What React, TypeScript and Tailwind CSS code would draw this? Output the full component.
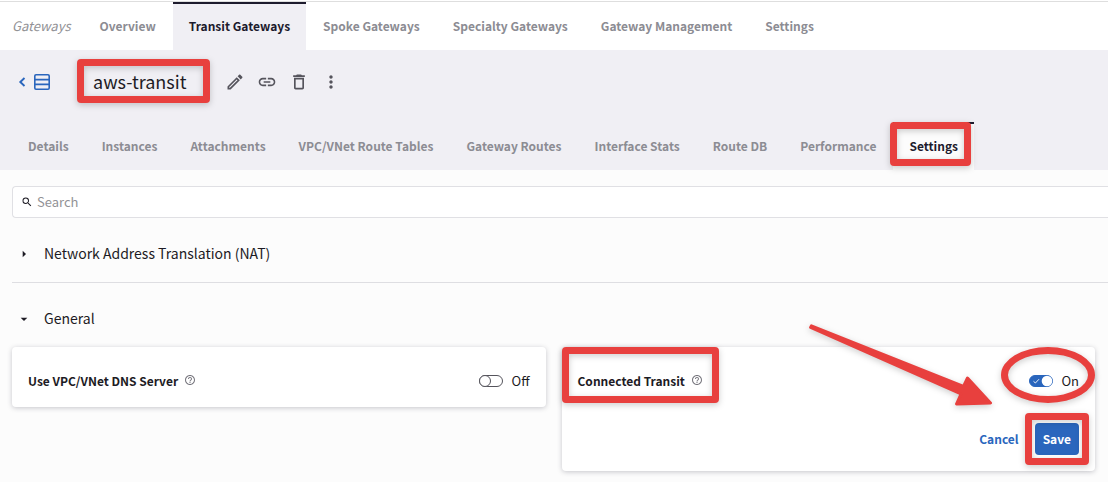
import { useState, type ReactNode } from "react";
import {
  MdArrowDropDown,
  MdArrowRight,
  MdDeleteOutline,
  MdHelpOutline,
  MdLink,
  MdMoreVert,
  MdOutlineEdit,
  MdSearch,
} from "react-icons/md";

const gatewayTabs = [
  "Overview",
  "Transit Gateways",
  "Spoke Gateways",
  "Specialty Gateways",
  "Gateway Management",
  "Settings",
];

const detailTabs = [
  "Details",
  "Instances",
  "Attachments",
  "VPC/VNet Route Tables",
  "Gateway Routes",
  "Interface Stats",
  "Route DB",
  "Performance",
  "Settings",
];

const actions = [
  { label: "Edit", Icon: MdOutlineEdit },
  { label: "Copy link", Icon: MdLink },
  { label: "Delete", Icon: MdDeleteOutline },
  { label: "More", Icon: MdMoreVert },
];

function Highlight({ className }: { className: string }) {
  return (
    <span
      aria-hidden="true"
      className={`pointer-events-none absolute z-10 border-[7px] border-[#e8403e] drop-shadow-[0_2px_3px_rgba(0,0,0,0.2)] ${className}`}
    />
  );
}

function Tab({
  label,
  active,
  activeBg,
  children,
}: {
  label: string;
  active: boolean;
  activeBg: string;
  children?: ReactNode;
}) {
  return (
    <a
      href="#"
      aria-current={active ? "page" : undefined}
      className={`relative flex h-12 shrink-0 items-center border-t-2 px-4 pb-0.5 text-xs leading-5 font-bold whitespace-nowrap ${
        active ? `border-[#1d1b2d] text-[#1d1b2d] ${activeBg}` : "border-transparent text-[#8c8c93]"
      }`}
    >
      {label}
      {children}
    </a>
  );
}

function Toggle({ id, on, onChange }: { id: string; on: boolean; onChange: (v: boolean) => void }) {
  return (
    <span className="relative flex">
      <input
        id={id}
        type="checkbox"
        role="switch"
        checked={on}
        onChange={(e) => onChange(e.target.checked)}
        className="h-3 w-6 appearance-none rounded-full border border-[#55545c] bg-white checked:border-[#2a66bd] checked:bg-[#2a66bd]"
      />
      <svg viewBox="0 0 24 12" className="pointer-events-none absolute inset-0 h-3 w-6" fill="none" aria-hidden="true">
        {on ? (
          <>
            <circle cx="18" cy="6" r="5.3" fill="#fff" />
            <path d="M4.5 6.3 6.4 8 10 4.2" stroke="#fff" strokeWidth="0.9" />
          </>
        ) : (
          <circle cx="6" cy="6" r="5.5" stroke="#55545c" fill="#fff" />
        )}
      </svg>
    </span>
  );
}

function SettingCard({
  id,
  title,
  initial,
  titleMark,
  toggleMark,
  children,
}: {
  id: string;
  title: string;
  initial: boolean;
  titleMark?: ReactNode;
  toggleMark?: ReactNode;
  children?: ReactNode;
}) {
  const [on, setOn] = useState(initial);
  return (
    <section className="relative rounded bg-white shadow-[0_1px_5px_rgba(40,40,60,0.25)]">
      <div className="flex h-15 items-center justify-between px-4 pt-2">
        <div className="relative flex items-center gap-1.5">
          <label htmlFor={id} className="text-xs leading-5 font-bold text-[#1d1b24]">
            {title}
          </label>
          <MdHelpOutline className="mb-0.5 size-3 text-[#77767e]" />
          {titleMark}
        </div>
        <div className="relative flex items-center gap-2">
          <Toggle id={id} on={on} onChange={setOn} />
          <span className="text-[13px] leading-5 text-[#1d1b24]">{on ? "On" : "Off"}</span>
          {toggleMark}
        </div>
      </div>
      {children}
    </section>
  );
}

export default function App() {
  return (
    <div className="min-h-screen overflow-x-hidden bg-[#fcfcfc] font-['Noto_Sans_CJK_SC',sans-serif] text-[#1d1b24]">
      <nav aria-label="Gateways" className="bg-white pt-px">
        <div className="flex gap-px border-t border-[#dedede] pl-3">
          <span className="flex items-center pr-3 text-[13px] leading-5 text-[#929296] italic">Gateways</span>
          {gatewayTabs.map((label) => (
            <Tab key={label} label={label} active={label === "Transit Gateways"} activeBg="bg-[#f0eff4]" />
          ))}
        </div>
      </nav>

      <header className="bg-[#f0eff4]">
        <div className="flex h-16 items-center px-4">
          <a href="#" aria-label="Back to gateways" className="flex text-[#2a66bd]">
            <svg viewBox="0 0 36 16" className="h-4 w-9" fill="none" stroke="currentColor" aria-hidden="true">
              <path d="M8.5 4 4.3 8l4.2 4" strokeWidth="1.9" />
              <rect x="18.8" y="0.8" width="14.4" height="14.4" rx="1.2" strokeWidth="1.6" />
              <path d="M19 5.6h14M19 10.4h14" strokeWidth="1.6" />
            </svg>
          </a>
          <h1 className="relative ml-[41px] pb-0.5 text-lg leading-6">
            aws-transit
            <Highlight className="-top-2.5 -right-6 -bottom-2 -left-4 rounded-sm" />
          </h1>
          <div className="ml-[37px] flex gap-2">
            {actions.map(({ label, Icon }) => (
              <button key={label} type="button" aria-label={label} className="flex size-6 items-center justify-center text-[#55545c]">
                <Icon className="size-5" />
              </button>
            ))}
          </div>
        </div>
        <nav aria-label="Gateway details" className="flex gap-px px-3 pt-2">
          {detailTabs.map((label) => (
            <Tab key={label} label={label} active={label === "Settings"} activeBg="bg-[#fcfcfc]">
              {label === "Settings" && <Highlight className="-top-0.5 right-[3px] bottom-1 -left-[3px] rounded-sm" />}
            </Tab>
          ))}
        </nav>
      </header>

      <main className="pt-4 pb-3 pl-3">
        <div className="flex h-8 items-center gap-1 rounded-l border border-r-0 border-[#e0e0e4] bg-white pl-2">
          <MdSearch className="size-3" />
          <input
            type="search"
            aria-label="Search"
            placeholder="Search"
            className="min-w-0 flex-1 bg-transparent text-[13px] leading-5 outline-none placeholder:text-[#929296]"
          />
        </div>

        <h2 className="mt-2 border-b border-[#dedee2]">
          <button type="button" aria-expanded="false" className="flex h-14 w-full items-center gap-3 pl-1 text-sm leading-6">
            <MdArrowRight className="size-4" />
            <span className="pb-0.5">Network Address Translation (NAT)</span>
          </button>
        </h2>

        <h2 className="mt-2">
          <button type="button" aria-expanded="true" className="flex h-14 w-full items-center gap-3 pl-1 text-sm leading-6">
            <MdArrowDropDown className="size-4" />
            <span className="pb-0.5">General</span>
          </button>
        </h2>

        <div className="grid grid-cols-2 items-start gap-4 pr-[13px]">
          <SettingCard id="dns-server" title="Use VPC/VNet DNS Server" initial={false} />
          <SettingCard
            id="connected-transit"
            title="Connected Transit"
            initial={true}
            titleMark={<Highlight className="-inset-x-4 -top-6 -bottom-3 rounded-sm" />}
            toggleMark={<Highlight className="-top-6 -right-4 -bottom-3 -left-7 rounded-[50%]" />}
          >
            <div className="flex justify-end gap-2 p-4">
              <button type="button" className="px-2 text-xs leading-5 font-bold text-[#2a66bd]">
                Cancel
              </button>
              <button type="button" className="relative h-8 rounded bg-[#2a66bd] px-2 text-xs leading-5 font-bold text-white">
                Save
                <Highlight className="-inset-x-2.5 -inset-y-2.5 rounded-sm" />
              </button>
            </div>
            <svg
              viewBox="0 0 190 90"
              className="pointer-events-none absolute -top-6 right-[101px] z-10 h-[90px] w-[190px] drop-shadow-[0_2px_3px_rgba(0,0,0,0.2)]"
              fill="#e8403e"
              stroke="#e8403e"
              strokeWidth="3"
              strokeLinejoin="round"
              aria-hidden="true"
            >
              <path d="M6.6 4.4 7.4 2.8 159.5 63.5 163.5 55 186.5 80 152.5 81 157 71Z" />
            </svg>
          </SettingCard>
        </div>
      </main>
    </div>
  );
}
